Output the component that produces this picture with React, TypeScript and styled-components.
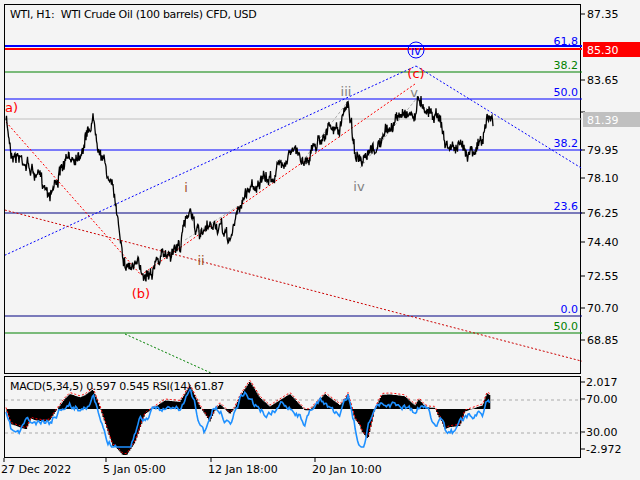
import React from "react";
import styled, { createGlobalStyle } from "styled-components";

const G = createGlobalStyle`
  html,body{margin:0;padding:0;background:#f4f4f4;}
  body{font-family:"DejaVu Sans","Liberation Sans",sans-serif;}
`;

const Root = styled.div`
  width:640px;height:480px;display:grid;
  grid-template-columns:581px 59px;
  grid-template-rows:4px 370px 2px 82px 22px;
  background:#f4f4f4;overflow:hidden;
`;
const Panel = styled.div<{ row: number }>`
  grid-column:1;grid-row:${p => p.row};margin-left:4px;
  border:1px solid #000;position:relative;box-sizing:border-box;
  svg{display:block;}
`;
const Axis = styled.div<{ row: number }>`
  grid-column:2;grid-row:${p => p.row};svg{display:block;overflow:visible;}
`;
const Title = styled.div`
  position:absolute;left:5px;top:3px;font-size:11px;color:#000;
  font-family:"DejaVu Sans",sans-serif;letter-spacing:-0.3px;
`;
const TimeRow = styled.div`
  grid-column:1 / span 2;grid-row:5;position:relative;font-size:11px;
  svg{display:block;}
`;

function rng(seed: number) { let s = seed; return () => { s = (s * 16807) % 2147483647; return s / 2147483647; }; }

const key: [number, number][] = [[1,120],[6,150],[20,160],[30,175],[45,190],[60,165],[75,150],[88,118],[96,150],[110,200],[120,262],[140,272],[160,255],[175,245],[185,205],[195,240],[210,225],[225,240],[235,205],[245,185],[265,180],[285,150],[300,160],[320,130],[335,130],[343,100],[350,150],[357,168],[370,150],[385,128],[400,110],[410,115],[414,98],[425,110],[435,115],[440,145],[460,150],[478,142],[482,118],[488,122]];
function interp(x: number) { for (let i = 0; i < key.length - 1; i++) { const [a, b] = key[i], [c, d] = key[i + 1]; if (x >= a && x <= c) return b + (d - b) * (x - a) / (c - a); } return 120; }
const r = rng(7);
let price = "";
let walk = 0;
for (let x = 1; x <= 488; x += 0.5) {
  walk = walk * 0.85 + (r() - 0.5) * 7;
  const y = interp(x) + walk + (r() - 0.5) * 9;
  price += `${x.toFixed(1)},${y.toFixed(1)} `;
}

const r2 = rng(11);
let rsi = "", hist = "", sig = "";
let w2 = 0;
const clamp = (v: number, a: number, b: number) => Math.max(a, Math.min(b, v));
for (let x = 1; x <= 485; x += 1.2) {
  const slope = interp(x) - interp(x - 14);
  w2 = w2 * 0.8 + (r2() - 0.5) * 6;
  const v = clamp(38 + slope * 0.55 + w2, 12, 70);
  rsi += `${x.toFixed(1)},${v.toFixed(1)} `;
  const top = clamp(32 + (interp(x) - interp(x - 20)) * 0.5, 5, 78);
  hist += `M${x.toFixed(1)},32V${top.toFixed(1)}`;
  sig += `${x.toFixed(1)},${(top - 1.5).toFixed(1)} `;
}

const A = { f: "DejaVu Sans, sans-serif", s: 11 };

export default function App() {
  const priceLabels: [string, number][] = [["87.35",14],["83.65",80],["79.95",150],["78.10",178],["76.25",213],["74.40",242],["72.55",276],["70.70",308],["68.85",340]];
  return (
    <Root>
      <G />
      <Panel row={2}>
        <Title>WTI, H1:&nbsp; WTI Crude Oil (100 barrels) CFD, USD</Title>
        <svg width="577" height="368">
          <g transform="translate(0,-5)">
            <line x1="0" x2="577" y1="46" y2="46" stroke="#0000ff" strokeWidth="2" />
            <line x1="0" x2="577" y1="49" y2="49" stroke="#ff0000" strokeWidth="2" />
            <line x1="0" x2="577" y1="72" y2="72" stroke="#008000" />
            <line x1="0" x2="577" y1="99" y2="99" stroke="#0000ff" />
            <line x1="0" x2="577" y1="119" y2="119" stroke="#c0c0c0" />
            <line x1="0" x2="577" y1="150" y2="150" stroke="#0000ff" />
            <line x1="0" x2="577" y1="213" y2="213" stroke="#000080" />
            <line x1="0" x2="577" y1="316" y2="316" stroke="#000080" />
            <line x1="0" x2="577" y1="333" y2="333" stroke="#008000" />
            <line x1="-4" y1="257" x2="411" y2="66" stroke="#0000ff" strokeDasharray="2 2" />
            <line x1="411" y1="66" x2="620" y2="195" stroke="#0000ff" strokeDasharray="2 2" />
            <line x1="1" y1="122" x2="136" y2="275" stroke="#ff0000" strokeDasharray="2 2" />
            <line x1="136" y1="275" x2="410" y2="84" stroke="#ff0000" strokeDasharray="2 2" />
            <line x1="-4" y1="209" x2="580" y2="362" stroke="#cc0000" strokeDasharray="2 2" />
            <line x1="120" y1="334" x2="206" y2="373" stroke="#008000" strokeDasharray="2 2" />
            <line x1="300" y1="158" x2="344" y2="100" stroke="#808080" strokeDasharray="3 2" strokeWidth="0.6" />
            <line x1="355" y1="168" x2="412" y2="98" stroke="#808080" strokeDasharray="3 2" strokeWidth="0.6" />
            <line x1="180" y1="240" x2="235" y2="205" stroke="#808080" strokeDasharray="3 2" strokeWidth="0.6" />
            <polyline points={price} fill="none" stroke="#000" strokeWidth="1.3" />
            <g fontFamily={A.f} fontSize="11" textAnchor="end">
              <text x="573" y="45" fill="#0000ff">61.8</text>
              <text x="573" y="69" fill="#008000">38.2</text>
              <text x="573" y="96" fill="#0000ff">50.0</text>
              <text x="573" y="147" fill="#0000ff">38.2</text>
              <text x="573" y="210" fill="#0000ff">23.6</text>
              <text x="573" y="313" fill="#0000ff">0.0</text>
              <text x="573" y="330" fill="#008000">50.0</text>
            </g>
            <g fontFamily={A.f} fontSize="13" textAnchor="middle">
              <text x="0" y="112" fill="#ff0000" textAnchor="start">a)</text>
              <text x="136" y="298" fill="#ff0000">(b)</text>
              <text x="181" y="192" fill="#a0522d">i</text>
              <text x="196" y="265" fill="#a0522d">ii</text>
              <text x="341" y="96" fill="#808080">iii</text>
              <text x="354" y="191" fill="#808080">iv</text>
              <text x="409" y="97" fill="#808080">v</text>
              <text x="411" y="78" fill="#ff0000">(c)</text>
              <circle cx="411" cy="50" r="8" fill="none" stroke="#0000ff" />
              <text x="411" y="55" fill="#0000ff" fontSize="12">iv</text>
            </g>
          </g>
        </svg>
      </Panel>
      <Axis row={2}>
        <svg width="59" height="370" fontFamily={A.f} fontSize="11">
          <g transform="translate(0,-4)">
            {priceLabels.map(([t, y]) => (
              <g key={t}><line x1="0" x2="4" y1={y} y2={y} stroke="#000" /><text x="6" y={y + 4}>{t}</text></g>
            ))}
            <line x1="0" x2="4" y1="112" y2="112" stroke="#000" />
            <rect x="2" y="42" width="57" height="15" fill="#ff0000" />
            <text x="6" y="54" fill="#fff">85.30</text>
            <rect x="2" y="112" width="57" height="15" fill="#c0c0c0" />
            <text x="6" y="124" fill="#fff">81.39</text>
          </g>
        </svg>
      </Axis>
      <Panel row={4}>
        <Title>MACD(5,34,5) 0.597 0.545 RSI(14) 61.87</Title>
        <svg width="577" height="80">
          <line x1="0" x2="577" y1="23" y2="23" stroke="#aaa" strokeDasharray="3 3" />
          <line x1="0" x2="577" y1="56" y2="56" stroke="#aaa" strokeDasharray="3 3" />
          <path d={hist} stroke="#000" strokeWidth="1.4" />
          <polyline points={sig} fill="none" stroke="#ff0000" strokeDasharray="2 2" />
          <polyline points={rsi} fill="none" stroke="#1e90ff" strokeWidth="1.6" />
        </svg>
      </Panel>
      <Axis row={4}>
        <svg width="59" height="82" fontFamily={A.f} fontSize="11">
          {[["2.017",6],["70.00",23],["30.00",56],["-2.972",73]].map(([t, y]) => (
            <g key={t as string}><line x1="0" x2="4" y1={y as number} y2={y as number} stroke="#000" /><text x="5" y={(y as number) + 4}>{t}</text></g>
          ))}
        </svg>
      </Axis>
      <TimeRow>
        <svg width="640" height="22" fontFamily={A.f} fontSize="11">
          {[[4,"27 Dec 2022"],[106,"5 Jan 05:00"],[211,"12 Jan 18:00"],[315,"20 Jan 10:00"]].map(([x, t]) => (
            <g key={t as string}><line x1={x as number} x2={x as number} y1="0" y2="4" stroke="#000" /><text x={(x as number) - 3} y="15">{t}</text></g>
          ))}
        </svg>
      </TimeRow>
    </Root>
  );
}
